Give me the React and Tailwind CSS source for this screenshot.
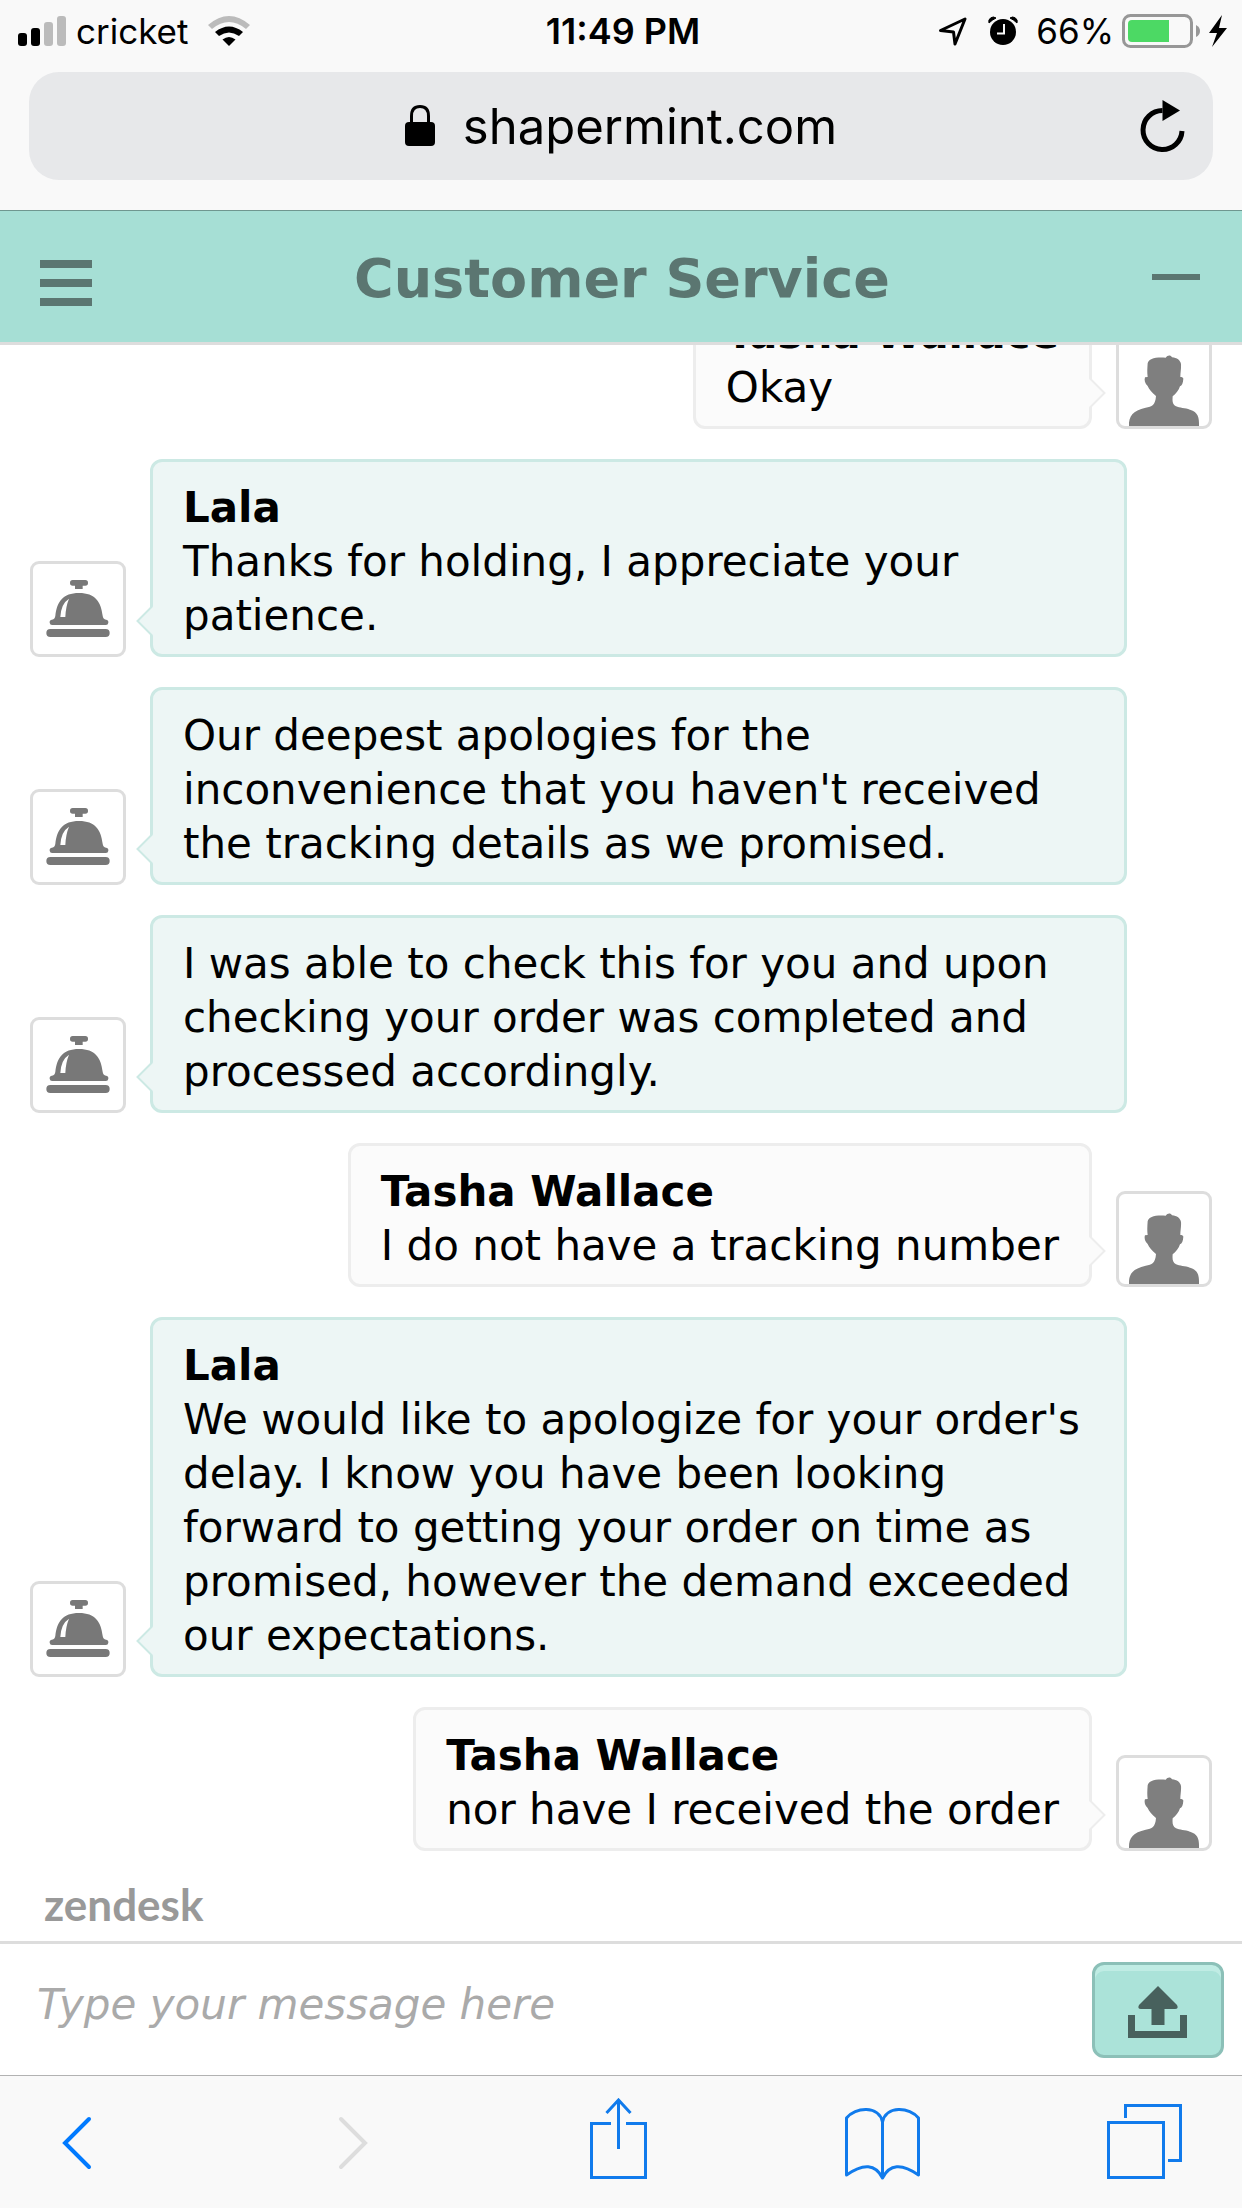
import React from "react";

const messages = [
  { from: "user", name: "Tasha Wallace", lines: ["Okay"] },
  { from: "agent", name: "Lala", lines: ["Thanks for holding, I appreciate your", "patience."] },
  {
    from: "agent",
    lines: ["Our deepest apologies for the", "inconvenience that you haven't received", "the tracking details as we promised."],
  },
  {
    from: "agent",
    lines: ["I was able to check this for you and upon", "checking your order was completed and", "processed accordingly."],
  },
  { from: "user", name: "Tasha Wallace", lines: ["I do not have a tracking number"] },
  {
    from: "agent",
    name: "Lala",
    lines: [
      "We would like to apologize for your order's",
      "delay. I know you have been looking",
      "forward to getting your order on time as",
      "promised, however the demand exceeded",
      "our expectations.",
    ],
  },
  { from: "user", name: "Tasha Wallace", lines: ["nor have I received the order"] },
];

function StatusBar() {
  return (
    <div className="grid grid-cols-[1fr_auto_1fr] items-center h-[62px] pl-[18px] pr-[14px] text-[35px] leading-none">
      <div className="flex items-center">
        <svg width="48" height="30" viewBox="0 0 48 30" aria-label="Signal">
          <rect x="0" y="17" width="9" height="13" rx="3" />
          <rect x="13" y="12" width="9" height="18" rx="3" />
          <rect x="26" y="6" width="9" height="24" rx="3" fill="#bbb" />
          <rect x="39" y="0" width="9" height="30" rx="3" fill="#bbb" />
        </svg>
        <span className="ml-2.5">cricket</span>
        <svg className="ml-5" width="42" height="30" viewBox="0 0 42 30" aria-label="Wi-Fi">
          <path d="M0 9Q21 -9 42 9L38 13Q21 -1 4 13Z" fill="#bbb" />
          <path d="M7 16Q21 5 35 16L31 20Q21 13 11 20Z" />
          <path d="M14.500 23.500Q21 18.500 27.500 23.500L21 30Z" />
        </svg>
      </div>
      <span className="text-[36px] font-semibold">11:49 PM</span>
      <div className="flex items-center justify-end">
        <svg width="30" height="30" viewBox="0 0 30 30" fill="none" stroke="#000" strokeWidth="3" strokeLinejoin="round" aria-label="Location">
          <path d="M2.500 14.500L27 3L17 28L15.500 16Z" />
        </svg>
        <svg className="ml-5" width="30" height="30" viewBox="0 0 30 30" aria-label="Alarm">
          <circle cx="15" cy="16" r="13" />
          <path d="M1 7A4.500 4.500 0 0 1 8 2Q4 4 1 7ZM29 7A4.500 4.500 0 0 0 22 2Q26 4 29 7Z" stroke="#000" strokeWidth="1" />
          <path d="M16 8V17.500H9" fill="none" stroke="#f9f9f9" strokeWidth="2" />
        </svg>
        <span className="ml-[18px] mr-2">66%</span>
        <svg width="78" height="34" viewBox="0 0 78 34" aria-label="Battery">
          <rect x="1.500" y="1.500" width="68" height="31" rx="7" fill="none" stroke="#979797" strokeWidth="3" />
          <path d="M10 6H47V28H10Q6 28 6 24V10Q6 6 10 6Z" fill="#4cd964" />
          <path d="M74 11Q78 13 78 17T74 23Z" fill="#979797" />
        </svg>
        <svg className="ml-2" width="20" height="32" viewBox="0 0 20 32" aria-label="Charging">
          <path d="M14 0L1 18H9L4 32L19 13H11Z" />
        </svg>
      </div>
    </div>
  );
}

function AddressBar() {
  return (
    <div className="relative mx-[29px] mt-2.5 flex h-[108px] items-center justify-center rounded-[30px] bg-[#e7e8ea]">
      <svg width="30" height="42" viewBox="0 0 30 42" aria-label="Secure">
        <rect x="0" y="17" width="30" height="24" rx="4" />
        <path d="M6.500 18V11Q6.500 1.500 15 1.500T23.500 11V18" fill="none" stroke="#000" strokeWidth="3" />
      </svg>
      <a href="#shapermint" className="ml-7 text-[49px] leading-none">shapermint.com</a>
      <button type="button" aria-label="Reload" className="absolute right-7 top-7">
        <svg width="45" height="53" viewBox="0 0 45 53">
          <path d="M22.500 10.500A19.500 19.500 0 1 0 42 31" fill="none" stroke="#000" strokeWidth="5" />
          <path d="M22.500 0V21L40 10.500Z" />
        </svg>
      </button>
    </div>
  );
}

function Bell() {
  return (
    <svg viewBox="99 372 270 270" fill="#787878" aria-label="Agent">
      <rect x="210" y="420" width="54" height="17" rx="8" />
      <rect x="225" y="434" width="23" height="13" />
      <path d="M237 459C286 459 303 486 308 527Q309 537 318 539A8 8 0 0 1 316 555H158A8 8 0 0 1 156 539Q165 537 166 527C171 486 188 459 237 459Z" />
      <path d="M207 476Q183 491 181 531H196Q197 500 207 476Z" fill="#fff" />
      <rect x="139" y="567" width="190" height="24" rx="12" />
    </svg>
  );
}

function Person() {
  return (
    <svg viewBox="357 222 270 270" fill="#7f7f7f" aria-label="Customer">
      <path d="M387 492C386 462 398 446 437 437C456 434 466 430 468 402C456 392 447 382 443 372C435 366 432 354 435 346L443 345C441 330 442 318 443 304C446 290 464 285 497 287C503 279 512 279 516 286C531 287 541 295 543 306C544 320 541 332 541 345C546 345 550 347 550 350C549 364 546 371 540 373C536 386 528 395 518 403C517 417 517 427 528 433C538 438 556 438 570 443C594 450 598 466 597 492Z" />
    </svg>
  );
}

function Message({ message }) {
  const agent = message.from === "agent";
  return (
    <li className={agent ? "flex shrink-0 items-end gap-6 pr-[85px]" : "flex shrink-0 flex-row-reverse items-end gap-6"}>
      <div className="size-24 shrink-0 rounded-[9px] border-[3px] border-[#ddd] bg-white">
        {agent ? <Bell /> : <Person />}
      </div>
      <div
        className={
          agent
            ? "relative min-w-0 flex-1 rounded-xl border-[3px] border-[#cce9e4] bg-[#edf6f5] px-[30px] pb-[11px] pt-[19px]"
            : "relative rounded-xl border-[3px] border-[#ededed] bg-[#fbfbfb] px-[30px] pb-[11px] pt-[19px]"
        }
      >
        {message.name && <strong className="block">{message.name}</strong>}
        {message.lines.map((line) => (
          <span key={line} className="block whitespace-nowrap">{line}</span>
        ))}
        {agent ? (
          <svg className="absolute -left-[17px] bottom-[18px]" width="18" height="30" viewBox="0 0 18 30" fill="#edf6f5">
            <path d="M18 0L14.500 2L1.500 15L14.500 28L18 30Z" />
            <path d="M16 0.500L1.500 15L16 29.500" fill="none" stroke="#cce9e4" strokeWidth="2" />
          </svg>
        ) : (
          <svg className="absolute -right-[17px] bottom-[18px]" width="18" height="30" viewBox="0 0 18 30" fill="#fbfbfb">
            <path d="M0 0L3.500 2L16.500 15L3.500 28L0 30Z" />
            <path d="M2 0.500L16.500 15L2 29.500" fill="none" stroke="#ededed" strokeWidth="2" />
          </svg>
        )}
      </div>
    </li>
  );
}

function Toolbar() {
  return (
    <nav className="grid h-[133px] shrink-0 grid-cols-[276fr_252fr_255fr_262fr_75fr] items-center justify-items-start border-t border-[#b2b2b2] bg-[#f9f9f9] pb-1.5 pl-[62px] pr-[60px]">
      <button type="button" aria-label="Back">
        <svg width="30" height="82" viewBox="0 0 30 82" fill="none" stroke="#007aff" strokeWidth="4" strokeLinecap="round">
          <path d="M27 21L3 45L27 69" />
        </svg>
      </button>
      <button type="button" aria-label="Forward" disabled>
        <svg width="30" height="82" viewBox="0 0 30 82" fill="none" stroke="#ddd" strokeWidth="4" strokeLinecap="round">
          <path d="M3 21L27 45L3 69" />
        </svg>
      </button>
      <button type="button" aria-label="Share">
        <svg width="57" height="82" viewBox="0 0 57 82" fill="none" stroke="#117bec" strokeWidth="3">
          <path d="M21 25.500H1.500V79.500H55.500V25.500H36M28.500 51V2M16.500 15L28.500 2L40.500 15" />
        </svg>
      </button>
      <button type="button" aria-label="Bookmarks">
        <svg width="75" height="82" viewBox="0 0 75 82" fill="none" stroke="#117bec" strokeWidth="3" strokeLinejoin="round">
          <path d="M37.500 80V24C34 7 10 9 1.500 20V77Q27 59 37.500 80Q48 59 73.500 77V20C65 9 41 7 37.500 24" />
        </svg>
      </button>
      <button type="button" aria-label="Tabs">
        <svg width="75" height="82" viewBox="0 0 75 82" fill="none" stroke="#117bec" strokeWidth="3">
          <path d="M1.500 24.500H56.500V79.500H1.500ZM18.500 20V7.500H73.500V62.500H61" />
        </svg>
      </button>
    </nav>
  );
}

export default function App() {
  return (
    <main className="flex h-screen flex-col overflow-hidden bg-white font-['DejaVu_Sans',sans-serif] text-[42px] leading-[54px] text-black">
      <div className="shrink-0 border-b border-[#6f9790] bg-[#f9f9f9] pb-[30px] font-[Inter,sans-serif]">
        <StatusBar />
        <AddressBar />
      </div>

      <header className="flex h-[134px] shrink-0 items-center justify-between border-b-[3px] border-[#ddd] bg-[#a6dfd5] pl-10 pr-[42px] text-[#5b7671]">
        <button type="button" aria-label="Menu" className="flex w-[52px] flex-col gap-[11px] pt-3">
          <span className="h-2 bg-[#5b7671]" />
          <span className="h-2 bg-[#5b7671]" />
          <span className="h-2 bg-[#5b7671]" />
        </button>
        <h1 className="pt-1 text-[54px] font-bold">Customer Service</h1>
        <button type="button" aria-label="Minimize" className="h-1.5 w-12 bg-[#5b7671]" />
      </header>

      <ul className="flex min-h-0 flex-1 flex-col justify-end gap-[30px] overflow-hidden px-[30px]">
        {messages.map((message, index) => (
          <Message key={index} message={message} />
        ))}
      </ul>

      <div className="flex h-[90px] shrink-0 items-center pl-11 pt-4">
        <a href="#zendesk" className="font-[Lato,sans-serif] text-[44px] font-bold text-[#999]">zendesk</a>
      </div>

      <form className="flex h-[134px] shrink-0 items-center border-t-[3px] border-[#ddd] pl-[37px] pr-[18px]">
        <input
          type="text"
          aria-label="Message"
          placeholder="Type your message here"
          className="h-[60px] min-w-0 flex-1 bg-transparent pb-2.5 italic outline-none placeholder:text-[#aaa]"
        />
        <button
          type="button"
          aria-label="Upload file"
          className="flex h-24 w-[132px] items-center justify-center rounded-xl border-[3px] border-[#8cc0b8] bg-[#abe3d9] pt-1 shadow-[inset_0_6px_0_#c0ece4]"
        >
          <svg width="60" height="54" viewBox="0 0 60 54" fill="#48615d">
            <path d="M30 1L49 20Q51 24 47 24H36.500V40H23.500V24H13Q9 24 11 20Z" />
            <path d="M0 30H7V46H52V30H59V53H0Z" />
          </svg>
        </button>
      </form>

      <Toolbar />
    </main>
  );
}
